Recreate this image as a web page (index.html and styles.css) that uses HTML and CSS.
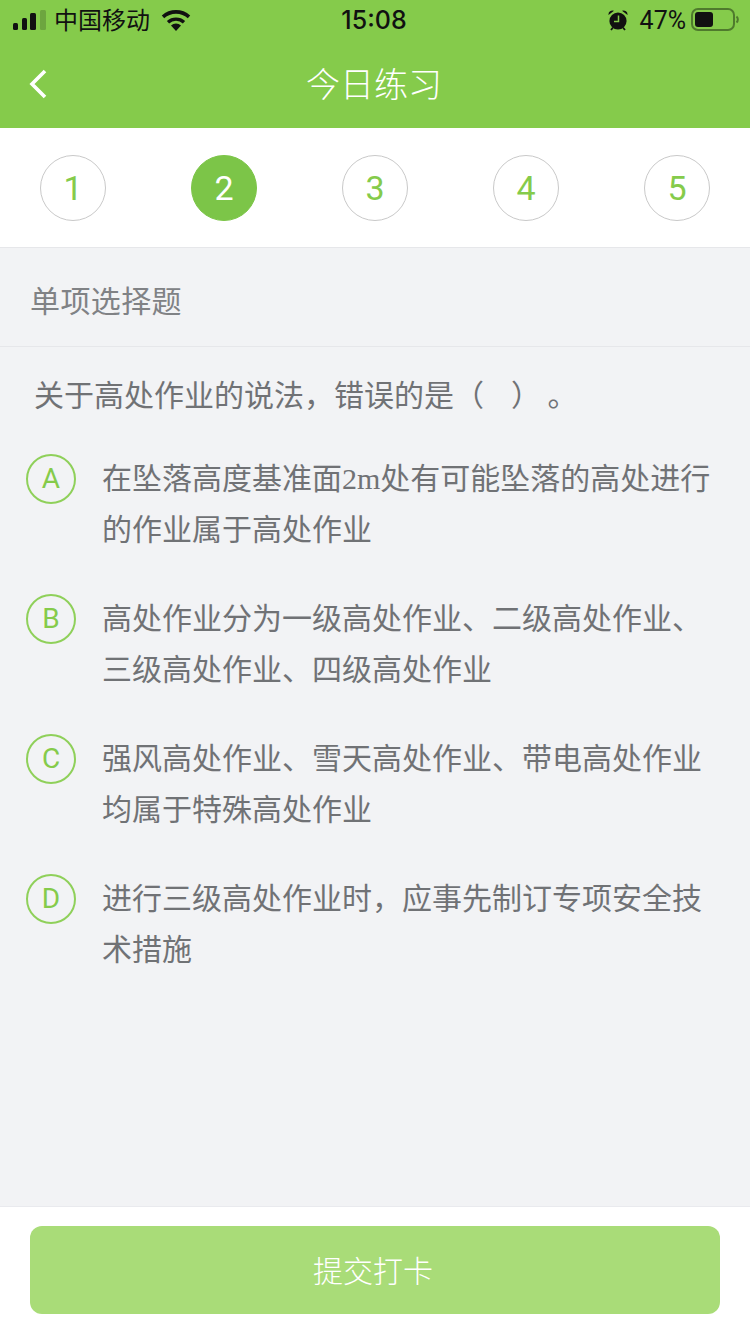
FILE: index.html
```html
<!DOCTYPE html>
<html lang="zh-CN">
<head>
  <meta charset="UTF-8">
  <meta name="viewport" content="width=device-width, initial-scale=1.0">
  <title>今日练习</title>
  <link rel="stylesheet" href="styles.css">
</head>
<body>
  <header class="top">
    <div class="status">
      <div class="status-left">
        <svg class="signal" width="34" height="22" viewBox="0 0 34 22">
          <rect x="0" y="14" width="5" height="7" rx="1.5" fill="#111"/>
          <rect x="9" y="9" width="5" height="12" rx="1.5" fill="#111"/>
          <rect x="17" y="4" width="6" height="17" rx="1.5" fill="#111"/>
          <rect x="27" y="1" width="6" height="20" rx="1.5" fill="#111" opacity="0.2"/>
        </svg>
        <span class="carrier">中国移动</span>
        <svg class="wifi" width="30" height="22" viewBox="0 0 30 22">
          <path d="M15 22 L10 16.5 A7.5 7.5 0 0 1 20 16.5 Z" fill="#111"/>
          <path d="M7 13.2 A12 12 0 0 1 23 13.2" fill="none" stroke="#111" stroke-width="3.4"/>
          <path d="M2 7.8 A19.5 19.5 0 0 1 28 7.8" fill="none" stroke="#111" stroke-width="3.6"/>
        </svg>
      </div>
      <div class="time">15:08</div>
      <div class="status-right">
        <svg class="alarm" width="20" height="21" viewBox="0 0 20 21">
          <circle cx="10" cy="11" r="8.6" fill="#111"/>
          <path d="M0.5 5 A4 4 0 0 1 6 0.8 Z M19.5 5 A4 4 0 0 0 14 0.8 Z" fill="#111"/>
          <path d="M3 20 L5 17.5 M17 20 L15 17.5" stroke="#111" stroke-width="1.8"/>
          <path d="M10.5 5.5 V11.5 H6" fill="none" stroke="#85cb4b" stroke-width="1.5"/>
        </svg>
        <span class="percent">47%</span>
        <svg class="battery" width="48" height="24" viewBox="0 0 48 24">
          <rect x="1" y="1" width="42" height="21" rx="6" fill="none" stroke="#4f7a2d" stroke-width="2"/>
          <rect x="4" y="4" width="18" height="15" rx="3" fill="#111"/>
          <path d="M45.5 8.5 A4 4 0 0 1 45.5 14.5" fill="none" stroke="#4f7a2d" stroke-width="2"/>
        </svg>
      </div>
    </div>
    <nav class="nav">
      <svg class="back" width="20" height="32" viewBox="0 0 20 32">
        <path d="M17 3 L4 16 L17 29" fill="none" stroke="#fff" stroke-width="3.6"/>
      </svg>
      <h1 class="title">今日练习</h1>
    </nav>
  </header>

  <div class="steps">
    <div class="step">1</div>
    <div class="step current">2</div>
    <div class="step">3</div>
    <div class="step">4</div>
    <div class="step">5</div>
  </div>

  <main class="main">
    <div class="type">单项选择题</div>
    <div class="question">关于高处作业的说法，错误的是（&nbsp;&nbsp;&nbsp;&nbsp;）&nbsp;。</div>
    <div class="options">
      <div class="option">
        <div class="letter">A</div>
        <div class="option-text">在坠落高度基准面<span class="latin">2m</span>处有可能坠落的高处进行的作业属于高处作业</div>
      </div>
      <div class="option">
        <div class="letter">B</div>
        <div class="option-text">高处作业分为一级高处作业、二级高处作业、三级高处作业、四级高处作业</div>
      </div>
      <div class="option">
        <div class="letter">C</div>
        <div class="option-text">强风高处作业、雪天高处作业、带电高处作业均属于特殊高处作业</div>
      </div>
      <div class="option">
        <div class="letter">D</div>
        <div class="option-text">进行三级高处作业时，应事先制订专项安全技术措施</div>
      </div>
    </div>
  </main>

  <footer class="footer">
    <button class="submit" type="button">提交打卡</button>
  </footer>
</body>
</html>
```

FILE: styles.css
```css
* {
  box-sizing: border-box;
}

html, body {
  height: 100%;
}

body {
  margin: 0;
  height: 1334px;
  display: flex;
  flex-direction: column;
  overflow: hidden;
  background-color: #f2f3f5;
  font-family: "Roboto", "Noto Sans CJK SC", sans-serif;
  color: #707275;
}

.top {
  height: 128px;
  background-color: #85cb4b;
}

.status {
  height: 40px;
  padding: 0 11px 0 13px;
  display: flex;
  align-items: center;
  color: #111;
}

.status-left, .status-right {
  flex: 1;
  display: flex;
  align-items: center;
}

.status-right {
  justify-content: flex-end;
}

.signal {
  margin-right: 8px;
}

.carrier {
  font-size: 24px;
  font-family: "Noto Sans CJK SC", sans-serif;
  margin: -4px 11px 0 -1px;
}

.time {
  margin-right: 4px;
  font-size: 25px;
  font-weight: 500;
  font-family: "Inter", "Roboto", sans-serif;
}

.alarm {
  margin-right: 12px;
}

.percent {
  font-size: 25px;
  margin-right: 5px;
}

.nav {
  height: 88px;
  position: relative;
  display: flex;
  align-items: center;
  justify-content: center;
  padding: 0 2px 4px 0;
}

.back {
  position: absolute;
  left: 28px;
  top: 28px;
}

.title {
  margin: 0;
  font-size: 34px;
  font-weight: 300;
  color: #fff;
  font-family: "Noto Sans CJK SC", sans-serif;
}

.steps {
  height: 120px;
  padding: 27px 40px 0;
  display: flex;
  justify-content: space-between;
  align-items: flex-start;
  background-color: #fff;
  border-bottom: 1px solid #e6e7ea;
}

.step {
  width: 66px;
  height: 66px;
  border: 1px solid #c9c9c9;
  border-radius: 50%;
  display: flex;
  align-items: center;
  justify-content: center;
  font-size: 34px;
  color: #85cb4b;
}

.step.current {
  background-color: #7cc548;
  border-color: #7cc548;
  color: #fff;
}

.main {
  flex: 1;
}

.type {
  height: 99px;
  padding: 4px 30px 0;
  display: flex;
  align-items: center;
  border-bottom: 1px solid #e6e7ea;
  font-size: 30px;
  letter-spacing: 0.4px;
  font-family: "Noto Sans CJK SC", sans-serif;
  color: #808285;
}

.question {
  padding: 21px 34px 0;
  font-size: 30px;
  line-height: 50px;
  font-family: "Noto Sans CJK SC", sans-serif;
}

.options {
  padding: 36px 25px 0 26px;
  display: flex;
  flex-direction: column;
  gap: 41px;
}

.option {
  display: flex;
  align-items: flex-start;
  gap: 26px;
}

.letter {
  flex: none;
  width: 50px;
  height: 50px;
  padding-bottom: 1px;
  border: 2px solid #8fd05a;
  border-radius: 50%;
  display: flex;
  align-items: center;
  justify-content: center;
  font-size: 28px;
  color: #85cb4b;
}

.option-text {
  margin-top: -3px;
  font-size: 30px;
  line-height: 51px;
  font-family: "Noto Sans CJK SC", sans-serif;
}

.latin {
  font-family: "Liberation Serif", serif;
  line-height: 1;
}

.footer {
  height: 128px;
  padding: 19px 30px 0;
  background-color: #fff;
  border-top: 1px solid #e9eaee;
}

.submit {
  display: block;
  width: 100%;
  height: 88px;
  padding: 0 4px 2px 0;
  border: none;
  border-radius: 12px;
  background-color: #a9dc78;
  color: #fff;
  font-size: 30px;
  font-weight: 300;
  font-family: "Noto Sans CJK SC", sans-serif;
}
```
